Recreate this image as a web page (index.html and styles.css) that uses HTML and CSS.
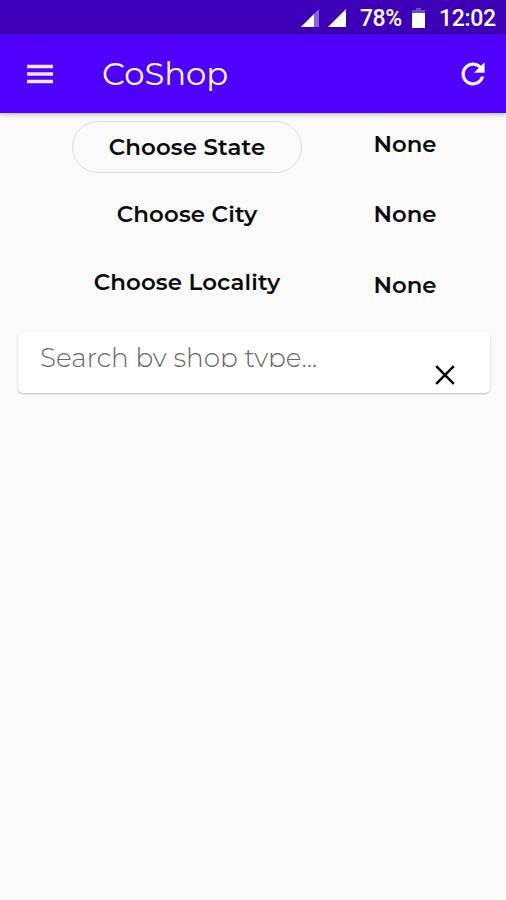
FILE: index.html
```html
<!DOCTYPE html>
<html lang="en">
<head>
<meta charset="utf-8">
<title>CoShop</title>
<link rel="stylesheet" href="styles.css">
</head>
<body>
<div class="status">
  <svg class="signal-one" width="18" height="18" viewBox="0 0 18 18"><path d="M0 18L18 0V18Z" fill="#8568d8"/><path d="M0 18L13 5V18Z" fill="#fff"/></svg>
  <svg class="signal-two" width="18" height="18" viewBox="0 0 18 18"><path d="M0 18L18 0V18Z" fill="#fff"/></svg>
  <span class="percent">78%</span>
  <svg class="battery" width="13" height="20" viewBox="0 0 13 20"><path d="M4 0H9V2H13V6H0V2H4Z" fill="#6c48cc"/><path d="M0 5H13V20H0Z" fill="#fff"/></svg>
  <span class="clock">12:02</span>
</div>
<header class="appbar">
  <svg class="menu" width="26" height="20" viewBox="0 0 26 20"><path d="M0 2.5H26M0 10H26M0 17.5H26" stroke="#eee6ff" stroke-width="3.6"/></svg>
  <h1 class="title">CoShop</h1>
  <svg class="refresh" width="34" height="34" viewBox="0 0 24 24"><path fill="#fff" stroke="#fff" stroke-width=".3" d="M17.65 6.35A7.96 7.96 0 0 0 12 4a8 8 0 1 0 7.73 10h-2.08A6 6 0 1 1 12 6c1.66 0 3.14.69 4.22 1.78L13 11h7V4z"/></svg>
</header>
<main>
  <section class="filters">
    <div class="choices">
      <button class="choice outlined">Choose State</button>
      <button class="choice">Choose City</button>
      <button class="choice">Choose Locality</button>
    </div>
    <div class="values">
      <span>None</span>
      <span>None</span>
      <span>None</span>
    </div>
  </section>
  <div class="search">
    <div class="hint">Search by shop type...</div>
    <svg class="clear" width="20" height="20" viewBox="0 0 20 20"><path d="M1.2 1.2L18.8 18.8M18.8 1.2L1.2 18.8" stroke="#000" stroke-width="2.5"/></svg>
  </div>
</main>
</body>
</html>
```
FILE: styles.css
```css
* { box-sizing: border-box; }
body {
  margin: 0;
  height: 900px;
  overflow: hidden;
  background: #fafafa;
  color: #0b0b0b;
  font-family: Montserrat, Inter, sans-serif;
}
svg { display: block; flex: none; }
.status {
  height: 34px;
  background: #3d00b8;
  color: #fff;
  display: flex;
  align-items: flex-start;
  padding-left: 301px;
  font: 500 23px/37px Roboto, sans-serif;
  white-space: nowrap;
}
.signal-one { margin-top: 9px; }
.signal-two { margin: 9px 0 0 9px; }
.percent { width: 42px; margin-left: 14px; letter-spacing: -.5px; }
.battery { margin: 8px 0 0 10px; }
.clock { margin-left: 14px; letter-spacing: -.3px; }
.appbar {
  height: 79px;
  background: #5000ff;
  color: #fff;
  display: flex;
  align-items: center;
  padding: 0 16px 0 27px;
  position: relative;
  box-shadow: 0 1px 5px rgba(0, 0, 0, .3);
}
.title {
  margin: 0 auto 0 49px;
  font-size: 32.3px;
  font-weight: 400;
  line-height: 38px;
}
.filters { display: flex; height: 219px; padding: 8px 0 0 72px; }
.choices { width: 230px; display: flex; flex-direction: column; gap: 15.3px; }
.choice {
  height: 52px;
  padding: 0;
  border: 1px solid transparent;
  border-radius: 26px;
  background: none;
  color: inherit;
  font: 600 22.9px/50px Montserrat, Inter, sans-serif;
  letter-spacing: .12px;
  white-space: nowrap;
}
.outlined { border-color: #dedede; }
.values {
  margin-left: 71.5px;
  padding-top: 3px;
  display: flex;
  flex-direction: column;
  gap: 30.3px;
  font-size: 22.8px;
  font-weight: 600;
  line-height: 40px;
}
.search {
  height: 61px;
  margin: 0 16px 0 18px;
  padding: 0 35px 0 22px;
  background: #fff;
  border-radius: 5px;
  box-shadow: 0 1px 2px rgba(0, 0, 0, .25);
  display: flex;
  justify-content: space-between;
}
.hint {
  height: 35px;
  overflow: hidden;
  color: #666;
  font-size: 26.3px;
  font-weight: 300;
  line-height: 53px;
}
.clear { margin-top: 33px; }
```
